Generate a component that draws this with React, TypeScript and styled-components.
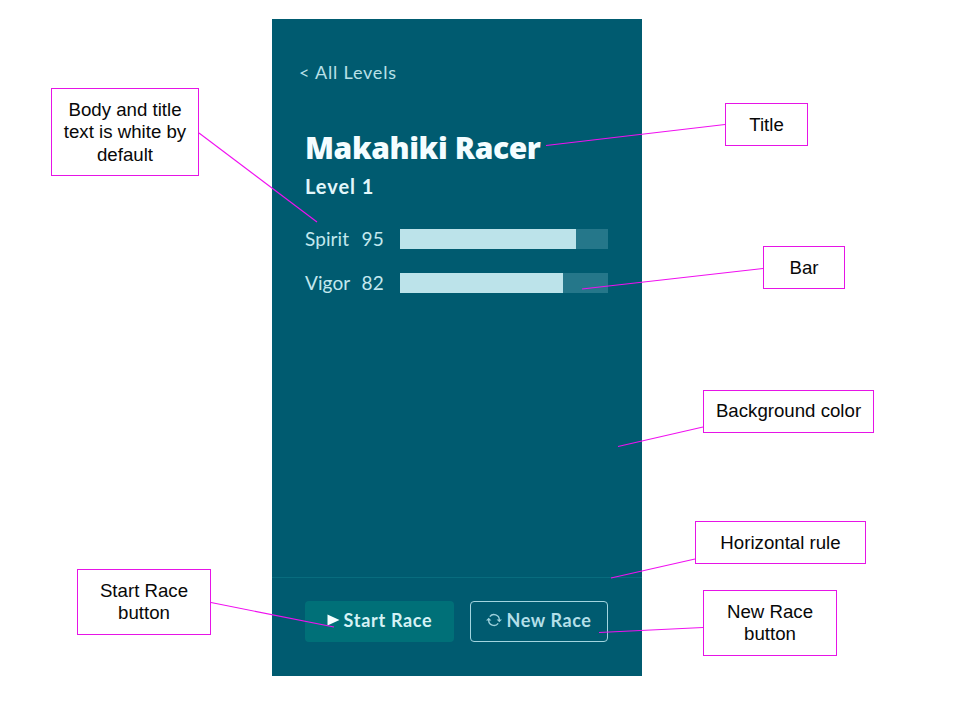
import React from "react";
import styled, { createGlobalStyle } from "styled-components";

const GlobalStyle = createGlobalStyle`
  *, *::before, *::after { box-sizing: border-box; }
  body { margin: 0; background: #fff; }
`;

const Canvas = styled.main`
  position: relative;
  width: 960px;
  height: 720px;
  padding: 19px 0 0 272px;
  overflow: hidden;
  background: #fff;
`;

const Phone = styled.section`
  display: flex;
  flex-direction: column;
  width: 370px;
  height: 657px;
  background: #005b70;
  color: #d3f1f7;
  font-family: Lato, sans-serif;
`;

const BackLink = styled.a`
  margin: 41px 0 0 27px;
  font-size: 18px;
  line-height: 24px;
  letter-spacing: 0.8px;
  color: #b9e0e8;
`;

const Details = styled.div`
  flex: 1;
  padding: 43px 34px 0 33px;
`;

const Title = styled.h1`
  margin: 0;
  font-family: "Noto Sans", sans-serif;
  font-size: 30px;
  font-weight: 900;
  line-height: 42px;
  letter-spacing: -0.4px;
  white-space: nowrap;
  color: #f4fdff;
`;

const Level = styled.h2`
  margin: 4px 0 0;
  font-size: 20px;
  font-weight: 700;
  line-height: 26px;
  letter-spacing: 0.95px;
  color: #e2f7fb;
`;

const Stats = styled.div`
  display: grid;
  gap: 20px;
  margin-top: 28px;
`;

const Stat = styled.div`
  display: grid;
  grid-template-columns: 56px 39px 208px;
  align-items: center;
  height: 24px;
  font-size: 19px;
  line-height: 24px;
  color: #c3e8ee;
`;

const StatName = styled.span<{ $spacing: number }>`
  letter-spacing: ${(p) => p.$spacing}px;
`;

const StatValue = styled.span`
  padding-left: 0.5px;
  letter-spacing: 0.2px;
`;

const Bar = styled.div`
  height: 20px;
  background: #25778a;
`;

const Fill = styled.div`
  height: 100%;
  background: #bce3ea;
`;

const Actions = styled.footer`
  display: flex;
  gap: 16px;
  height: 99px;
  padding: 23px 34px 0 33px;
  border-top: 1px solid #086c7e;
`;

const Button = styled.button<{ $primary?: boolean }>`
  display: flex;
  align-items: center;
  justify-content: center;
  gap: ${(p) => (p.$primary ? 4 : 4)}px;
  width: ${(p) => (p.$primary ? 149 : 138)}px;
  height: 41px;
  padding: 0 0 3px;
  border: ${(p) => (p.$primary ? "0" : "1.5px solid #a3d5df")};
  border-radius: 4px;
  background: ${(p) => (p.$primary ? "#007078" : "transparent")};
  color: ${(p) => (p.$primary ? "#d5f2f5" : "#b3dfe8")};
  font: 700 18px/24px Lato, sans-serif;
  letter-spacing: ${(p) => (p.$primary ? 0.7 : 0.6)}px;
  white-space: nowrap;
`;

const Note = styled.div<{ $x: number; $y: number; $w: number; $h: number; $lower?: boolean }>`
  position: absolute;
  left: ${(p) => p.$x}px;
  top: ${(p) => p.$y}px;
  display: flex;
  align-items: center;
  justify-content: center;
  width: ${(p) => p.$w}px;
  height: ${(p) => p.$h}px;
  padding-top: ${(p) => (p.$lower ? 1 : 0)}px;
  border: 1px solid #e614e6;
  background: #fff;
  color: #080808;
  font-family: "Liberation Sans", Arial, sans-serif;
  font-size: 18.67px;
  line-height: 22.4px;
  text-align: center;
  white-space: pre-line;
`;

const Connectors = styled.svg`
  position: absolute;
  inset: 0;
  pointer-events: none;
`;

const stats = [
  { name: "Spirit", value: 95, fill: 84.6, spacing: 0.1 },
  { name: "Vigor", value: 82, fill: 78.4, spacing: 0.1 },
];

const notes = [
  { text: "Body and title\ntext is white by\ndefault", x: 51, y: 88, w: 148, h: 88, lower: true },
  { text: "Title", x: 725, y: 103, w: 83, h: 43, lower: true },
  { text: "Bar", x: 763, y: 246, w: 82, h: 43, lower: true },
  { text: "Background color", x: 703, y: 390, w: 171, h: 43 },
  { text: "Horizontal rule", x: 695, y: 521, w: 171, h: 43, lower: true },
  { text: "Start Race\nbutton", x: 77, y: 569, w: 134, h: 66 },
  { text: "New Race\nbutton", x: 703, y: 590, w: 134, h: 66 },
];

const lines = [
  [199, 133, 317, 222],
  [725, 124.5, 546, 145.5],
  [763, 268.5, 582, 289],
  [703, 427, 618, 446.5],
  [695, 559, 611, 578],
  [211, 602.5, 334, 627],
  [703, 627.5, 599, 632.5],
];

const PlayIcon = () => (
  <svg width="13" height="12" viewBox="0 0 13 12">
    <path d="M0.5 0.5 12.5 6 0.5 11.5Z" fill="#f4ffff" />
  </svg>
);

const RefreshIcon = () => (
  <svg width="16" height="14" viewBox="0 0 16 14" fill="none" stroke="#9bd0db" strokeWidth="1.4">
    <path d="M3.8 3.6A5.3 5.3 0 0 1 13.3 7M12.2 10.4A5.3 5.3 0 0 1 2.7 7" />
    <path d="M10.6 6.4H16L13.3 9.3ZM0 7.6H5.4L2.7 4.7Z" fill="#9bd0db" stroke="none" />
  </svg>
);

export default function App() {
  return (
    <>
      <GlobalStyle />
      <Canvas>
        <Phone>
          <BackLink>&lt; All Levels</BackLink>
          <Details>
            <Title>Makahiki Racer</Title>
            <Level>Level 1</Level>
            <Stats>
              {stats.map((s) => (
                <Stat key={s.name}>
                  <StatName $spacing={s.spacing}>{s.name}</StatName>
                  <StatValue>{s.value}</StatValue>
                  <Bar>
                    <Fill style={{ width: `${s.fill}%` }} />
                  </Bar>
                </Stat>
              ))}
            </Stats>
          </Details>
          <Actions>
            <Button $primary>
              <PlayIcon />
              Start Race
            </Button>
            <Button>
              <RefreshIcon />
              New Race
            </Button>
          </Actions>
        </Phone>
        {notes.map((n) => (
          <Note key={n.text} $x={n.x} $y={n.y} $w={n.w} $h={n.h} $lower={n.lower}>
            {n.text}
          </Note>
        ))}
        <Connectors width="960" height="720" viewBox="0 0 960 720" stroke="#f010f0" strokeWidth="1.1">
          {lines.map(([x1, y1, x2, y2]) => (
            <line key={`${x1}-${y1}`} x1={x1} y1={y1} x2={x2} y2={y2} />
          ))}
        </Connectors>
      </Canvas>
    </>
  );
}
